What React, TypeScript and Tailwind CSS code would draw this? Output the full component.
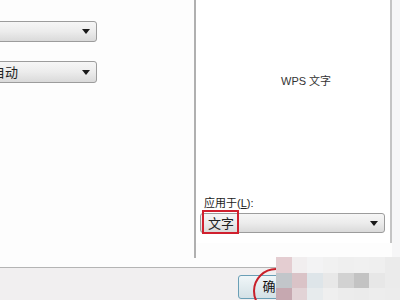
// @ts-nocheck
import React from 'react';

const font = { fontFamily: '"Liberation Sans", "Noto Sans CJK SC", sans-serif' };

const mosaic = [
  ['#e4cdd1', '#f1eeef', '#f3f3f4', '#f1f1f1', '#efefef', '#f0f0f0', '#efefef', '#ebebeb'],
  ['#c2c6ca', '#dac3c7', '#dee5e9', '#e8e8e8', '#d2d2d2', '#c3c3c3', '#e7e7e7', '#ebebeb'],
  ['#c6a8b0', '#e2d3d6', '#e7ebed', '#efefef', '#ececec', '#ebebeb', '#ededed', '#ececec'],
];

function Arrow() {
  return (
    <svg width="8" height="5" viewBox="0 0 8 5" className="shrink-0">
      <path d="M0 0h8L4 5z" fill="#1a1a1a" />
    </svg>
  );
}

function Combo({ children, className = '' }) {
  return (
    <div
      className={`flex items-center justify-between border border-[#9c9c9c] rounded-[3px] bg-gradient-to-b from-[#f6f6f6] via-[#ececec] to-[#dadada] pr-[6px] ${className}`}
    >
      <div className="flex items-center">{children}</div>
      <Arrow />
    </div>
  );
}

export default function App() {
  return (
    <div className="relative w-[400px] h-[300px] overflow-hidden bg-[#fdfdfd] text-[#222]" style={font}>
      <div className="flex h-[258px]">
        {/* left pane */}
        <div className="w-[194px] flex flex-col pt-[21px]">
          <Combo className="ml-[-4px] w-[101px] h-[21px]" />
          <Combo className="ml-[-4px] w-[101px] h-[22px] mt-[19px]">
            <span className="text-[13px] leading-none ml-[-5px]">自动</span>
          </Combo>
        </div>
        <div className="w-[2px] bg-[#b0b0b0]" />
        {/* right pane */}
        <div className="w-[196px] h-[243px] bg-white border-r-2 border-[#c4c4c4] flex flex-col">
          <div className="pl-[85px] pt-[73px] text-[11px] text-[#333]">WPS 文字</div>
          <div className="mt-auto pl-[8px] text-[11px] leading-none">
            应用于(<span className="underline">L</span>):
          </div>
          <div className="relative ml-[4px] mt-[4px] mb-[10px] w-[185px]">
            <Combo className="h-[20px] w-[185px]">
              <span className="text-[13px] leading-none ml-[7px]">文字</span>
            </Combo>
            <div className="absolute left-[2px] top-[-3px] w-[37px] h-[24px] border-2 border-[#d0202e]" />
          </div>
        </div>
        <div className="flex-1 bg-[#f6f6f7]" />
      </div>
      <div className="h-[9px] bg-[#fdfdfd]" />
      <div className="h-[33px] border-t border-[#b4b4b4] bg-[#f1eff0] flex items-start pl-[238px] pt-[7px]">
        <div className="w-[75px] h-[24px] rounded-[3px] border border-[#6a9fb6] bg-gradient-to-b from-[#f0f6f8] to-[#d4e1e6] flex items-center justify-center text-[13px] text-[#111]">
          确定
        </div>
      </div>
      {/* red circle mark */}
      <div className="absolute left-[253px] top-[268px] w-[72px] h-[46px] rounded-full border-2 border-[#c8202a]" />
      {/* mosaic */}
      <div className="absolute left-[276px] top-[257px] grid grid-cols-8 grid-rows-[16px_15px_15px] w-[124px]">
        {mosaic.flat().map((c, i) => (
          <div key={i} style={{ backgroundColor: c }} />
        ))}
      </div>
    </div>
  );
}
